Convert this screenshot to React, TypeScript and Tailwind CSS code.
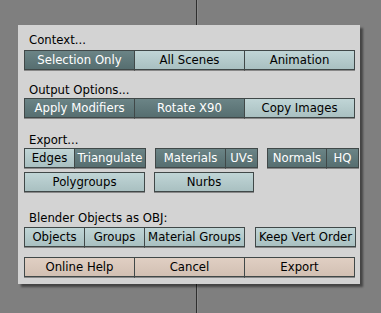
import React from "react";

type Kind = "on" | "off" | "act";

function Btn({ label, w, kind, first }: { label: string; w: number; kind: Kind; first?: boolean }) {
  const cls =
    kind === "on"
      ? "bg-gradient-to-b from-[#6b8486] to-[#566e70] text-white"
      : kind === "off"
      ? "bg-gradient-to-b from-[#c0d5d6] to-[#a9c0c1] text-black"
      : "bg-gradient-to-b from-[#e0cfc3] to-[#d2c0b3] text-black";
  return (
    <div
      className={`h-[20px] flex items-center justify-center pt-px border border-[#404848] shadow-[0_1px_0_rgba(0,0,0,0.35)] text-[11.7px] leading-none whitespace-nowrap ${cls} ${first ? "" : "-ml-px"}`}
      style={{ width: w }}
    >
      {label}
    </div>
  );
}

function Label({ text, mt }: { text: string; mt: string }) {
  return <div className={`h-[13px] text-[11.7px] leading-[13px] text-black pl-[5px] ${mt}`}>{text}</div>;
}

export default function App() {
  return (
    <div
      className="relative w-[381px] h-[313px] bg-[#7f7f7f] overflow-hidden"
      style={{ fontFamily: '"DejaVu Sans", sans-serif' }}
    >
      <div className="absolute left-[196px] top-0 h-full w-px bg-[#2e2e2e]" />
      <div className="absolute left-[197px] top-0 h-full w-px bg-[#8c8c8c]" />
      <div className="absolute left-[18px] top-[25px] w-[342px] h-[259px] bg-[#d3d3d3] shadow-[3px_3px_2px_rgba(0,0,0,0.45)] pl-[6px] pt-[9px]">
        <Label text="Context..." mt="" />
        <div className="flex mt-[3px]">
          <Btn label="Selection Only" w={111} kind="on" first />
          <Btn label="All Scenes" w={111} kind="off" />
          <Btn label="Animation" w={111} kind="off" />
        </div>
        <Label text="Output Options..." mt="mt-[14px]" />
        <div className="flex mt-[1px]">
          <Btn label="Apply Modifiers" w={111} kind="on" first />
          <Btn label="Rotate X90" w={111} kind="on" />
          <Btn label="Copy Images" w={111} kind="off" />
        </div>
        <Label text="Export..." mt="mt-[16px]" />
        <div className="flex mt-[1px]">
          <div className="flex">
            <Btn label="Edges" w={51} kind="off" first />
            <Btn label="Triangulate" w={72} kind="on" />
          </div>
          <div className="flex ml-[9px]">
            <Btn label="Materials" w={71} kind="on" first />
            <Btn label="UVs" w={33} kind="on" />
          </div>
          <div className="flex ml-[9px]">
            <Btn label="Normals" w={60} kind="on" first />
            <Btn label="HQ" w={33} kind="on" />
          </div>
        </div>
        <div className="flex mt-[4px]">
          <Btn label="Polygroups" w={121} kind="off" first />
          <div className="ml-[9px]">
            <Btn label="Nurbs" w={100} kind="off" first />
          </div>
        </div>
        <Label text="Blender Objects as OBJ:" mt="mt-[20px]" />
        <div className="flex mt-[2px]">
          <Btn label="Objects" w={61} kind="off" first />
          <Btn label="Groups" w={61} kind="off" />
          <Btn label="Material Groups" w={101} kind="off" />
          <div className="ml-[10px]">
            <Btn label="Keep Vert Order" w={101} kind="off" first />
          </div>
        </div>
        <div className="flex mt-[10px]">
          <Btn label="Online Help" w={111} kind="act" first />
          <Btn label="Cancel" w={111} kind="act" />
          <Btn label="Export" w={111} kind="act" />
        </div>
      </div>
    </div>
  );
}
